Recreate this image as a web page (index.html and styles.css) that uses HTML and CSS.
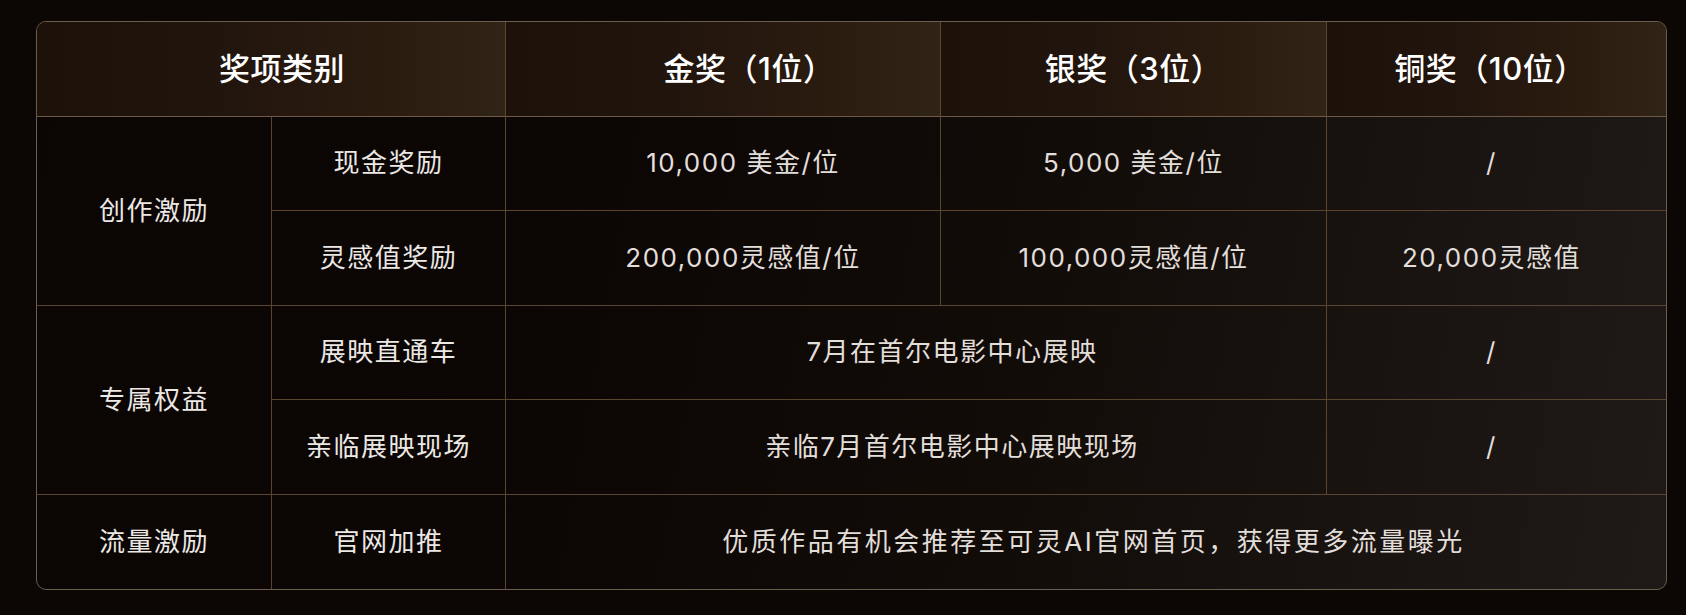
FILE: index.html
```html
<!DOCTYPE html>
<html lang="zh-CN">
<head>
<meta charset="utf-8">
<title>奖项设置</title>
<link rel="stylesheet" href="styles.css">
</head>
<body>
<div class="awards">
  <div class="cell head span-2 shift-cat">奖项类别</div>
  <div class="cell head shift-gold">金奖（1位）</div>
  <div class="cell head">银奖（3位）</div>
  <div class="cell head last-col shift-bronze">铜奖（10位）</div>

  <div class="cell group rows-2">创作激励</div>
  <div class="cell sub">现金奖励</div>
  <div class="cell col-gold">10,000 美金/位</div>
  <div class="cell">5,000 美金/位</div>
  <div class="cell last-col col-bronze">/</div>

  <div class="cell sub">灵感值奖励</div>
  <div class="cell col-gold">200,000灵感值/位</div>
  <div class="cell">100,000灵感值/位</div>
  <div class="cell last-col col-bronze">20,000灵感值</div>

  <div class="cell group rows-2">专属权益</div>
  <div class="cell sub">展映直通车</div>
  <div class="cell span-2 shift-wide">7月在首尔电影中心展映</div>
  <div class="cell last-col col-bronze">/</div>

  <div class="cell sub">亲临展映现场</div>
  <div class="cell span-2 shift-wide">亲临7月首尔电影中心展映现场</div>
  <div class="cell last-col col-bronze">/</div>

  <div class="cell group last-row">流量激励</div>
  <div class="cell sub last-row">官网加推</div>
  <div class="cell span-3 last-row last-col shift-full">优质作品有机会推荐至可灵AI官网首页，获得更多流量曝光</div>
</div>
</body>
</html>
```
FILE: styles.css
```css
html, body {
  margin: 0;
  background: #0c0604;
}
body {
  padding: 21px 19px 0 36px;
  font-family: "Inter", "Noto Sans CJK SC", "Noto Sans", sans-serif;
  color: #e2deda;
}
.awards {
  display: grid;
  grid-template-columns: 235px 234px 435px 386px 339px;
  grid-template-rows: repeat(6, 94.5px);
  border: 1px solid #6b5d4c;
  border-radius: 10px;
  overflow: hidden;
  width: 1629px;
  background: linear-gradient(100deg, #0b0503 0%, #0c0604 35%, #120c09 60%, #1f1a17 100%);
}
.cell {
  display: flex;
  align-items: center;
  justify-content: center;
  border-right: 1px solid #5a4630;
  border-bottom: 1px solid #5a4630;
  font-size: 26px;
  letter-spacing: 1.5px;
  line-height: 1;
}
.head {
  font-size: 31px;
  font-weight: 500;
  color: #ffffff;
  letter-spacing: 0.5px;
  background: linear-gradient(90deg, #1d110a 0%, #22150d 40%, #2b1c10 75%, #302416 100%);
  border-bottom-color: #6b5a45;
}
.span-2 { grid-column: span 2; }
.span-3 { grid-column: span 3; }
.rows-2 { grid-row: span 2; }
.last-col { border-right: none; }
.last-row { border-bottom: none; }
.group, .sub { color: #ebe8e5; }

.shift-cat { padding-left: 22px; }
.shift-gold { padding-left: 52px; }
.shift-bronze { padding-right: 13px; }
.col-gold { padding-left: 40px; }
.col-bronze { padding-right: 10px; }
.shift-wide { padding-left: 72px; }
.shift-full { padding-left: 15px; letter-spacing: 2.5px; }
```
